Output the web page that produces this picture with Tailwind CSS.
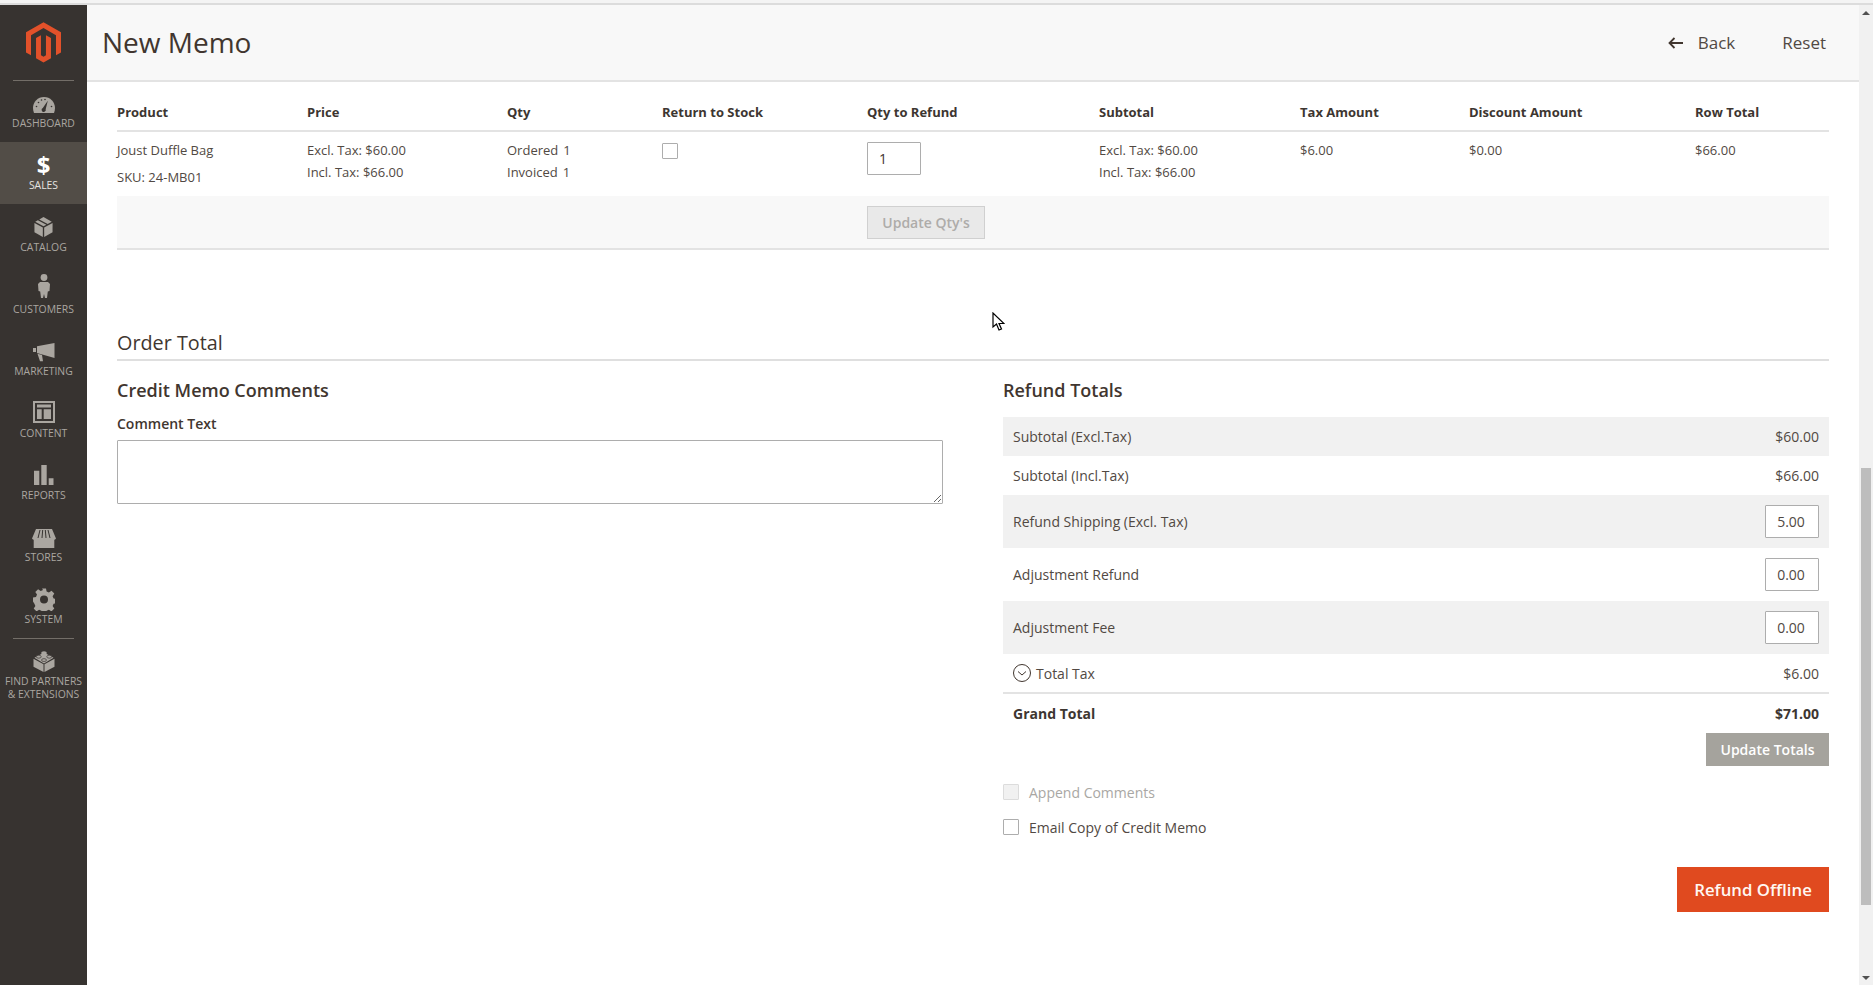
<!DOCTYPE html>
<html><head><meta charset="utf-8"><script src="https://cdn.jsdelivr.net/npm/@tailwindcss/browser@4"></script><title>New Memo</title></head>
<body class="font-['Open_Sans',sans-serif] text-[#41362f] bg-white">
<div class="relative w-[1873px] h-[985px] overflow-hidden flex flex-col">
  <div class="h-[5px] shrink-0 bg-[#f4f4f4] border-b-2 border-[#dcdcdc]"></div>
  <div class="flex-1 flex min-h-0">
    <!-- sidebar -->
    <aside class="w-[87px] shrink-0 bg-[#373330] flex flex-col text-[#aaa6a0] text-[10.4px] leading-[14px] text-center">
      <div class="h-[76px] flex items-center justify-center mx-[13px] border-b border-[#736e68]">
        <svg class="w-[35px] h-[41px]" viewBox="0 0 44 51" fill="#e2512a"><path d="M22 0 0 12.700V38l6.300 3.600V16.300L22 7.200l15.700 9.100v25.300L44 38V12.700z"/><path d="M25.100 41.600 22 43.400l-3.200-1.800V16.300l-6.200 3.600v25.300L22 50.700l9.400-5.500V19.900l-6.300-3.600z"/></svg>
      </div>
      <a class="h-[61px] flex flex-col items-center">
        <div class="h-[35px] pb-[3px] flex items-end">
          <svg class="w-[22px] h-[16px]" viewBox="0 0 22 16" fill="#aaa6a0"><path d="M11 0C4.900 0 0 4.900 0 11c0 1.700.4 3.400 1 5h20c.6-1.600 1-3.300 1-5C22 4.900 17.100 0 11 0z"/><path d="M14.800 3.800 9.800 11a2.100 2.100 0 1 0 2.900 1.200z" fill="#373330"/><circle cx="3.500" cy="9.500" r=".8" fill="#373330"/><circle cx="5.500" cy="5.500" r=".8" fill="#373330"/><circle cx="8.500" cy="3" r=".8" fill="#373330"/><circle cx="12" cy="2.500" r=".8" fill="#373330"/><circle cx="18.500" cy="9.500" r=".8" fill="#373330"/></svg>
        </div>
        <span>DASHBOARD</span>
      </a>
      <a class="h-[62px] flex flex-col items-center bg-[#524d47]">
        <div class="h-[36px] flex items-end text-white text-[24px] leading-[26px] font-bold">$</div>
        <span class="text-[#e6e4e1]">SALES</span>
      </a>
      <a class="h-[62px] flex flex-col items-center">
        <div class="h-[36px] pb-[3px] flex items-end">
          <svg class="w-[19px] h-[20px]" viewBox="0 0 19 21" fill="#aaa6a0"><path d="M0 6.200 8.800 11v10L0 16z"/><path d="M19 6.200 10.200 11v10l8.800-5z"/><path d="M9.500 0 5 2.500l8.900 4.900 4.300-2.300zM3.600 3.300.8 5l8.700 4.800 3-1.700z"/></svg>
        </div>
        <span>CATALOG</span>
      </a>
      <a class="h-[62px] flex flex-col items-center">
        <div class="h-[36px] pb-[4px] flex items-end">
          <svg class="w-[12px] h-[24px]" viewBox="0 0 12 24" fill="#aaa6a0"><circle cx="6" cy="3.500" r="3.400"/><path d="M2 8h8l2 2-.5 7-1.700.5L9 24H7l-1-4-1 4H3l-.8-6.500L.5 17 0 10z"/></svg>
        </div>
        <span>CUSTOMERS</span>
      </a>
      <a class="h-[62px] flex flex-col items-center">
        <div class="h-[36px] pb-[2px] flex items-end">
          <svg class="w-[22px] h-[19px]" viewBox="0 0 22 19" fill="#aaa6a0"><path d="M0 5h3v4H0zM4 3.300 21.500 0v15L4 10zM4.500 10.800 9 12l1 6.300H7z"/></svg>
        </div>
        <span>MARKETING</span>
      </a>
      <a class="h-[62px] flex flex-col items-center">
        <div class="h-[36px] pb-[3px] flex items-end">
          <svg class="w-[22px] h-[22px]" viewBox="0 0 22 22" fill="#aaa6a0"><path fill-rule="evenodd" d="M0 0h22v22H0zM2 2v18h18V2z"/><path d="M4 3.500h14v3H4zM4 8.300h4.700V18H4zM10.700 8.300H18V18h-7.300z"/></svg>
        </div>
        <span>CONTENT</span>
      </a>
      <a class="h-[62px] flex flex-col items-center">
        <div class="h-[36px] pb-[3px] flex items-end">
          <svg class="w-[20px] h-[20px]" viewBox="0 0 20 20" fill="#aaa6a0"><path d="M0 5.700h5.300V20H0zM7.300 0h5.400v20H7.300zM14.700 13.300h4.800V20h-4.800z"/></svg>
        </div>
        <span>REPORTS</span>
      </a>
      <a class="h-[62px] flex flex-col items-center">
        <div class="h-[36px] pb-[2px] flex items-end">
          <svg class="w-[24px] h-[19px]" viewBox="0 0 24 19" fill="#aaa6a0"><path d="M4 0h16l4 9.500c-1 1.500-2.500 1.500-3 .5H3c-.5 1-2 1-3-.5z"/><path d="M1.700 9h20.600v10H1.700z"/><path d="M8 1 6 9M10.700 1 10 9M13.300 1 14 9M16 1l2 8" stroke="#373330" stroke-width="1"/></svg>
        </div>
        <span>STORES</span>
      </a>
      <a class="h-[62px] flex flex-col items-center">
        <div class="h-[36px] pb-[1px] flex items-end">
          <svg class="w-[22px] h-[23px]" viewBox="0 0 22 22" fill="#aaa6a0"><path fill-rule="evenodd" d="M9 0h4l.6 3 2.300 1 2.600-1.700 2.800 2.800-1.700 2.600 1 2.300 3 .6v4l-3 .6-1 2.300 1.700 2.600-2.800 2.800-2.600-1.700-2.300 1-.6 3H9l-.6-3-2.300-1-2.600 1.700-2.800-2.800 1.700-2.600-1-2.300L0 13V9l3-.6 1-2.300-1.700-2.600 2.800-2.800 2.600 1.700 2.300-1zM11 7a4 4 0 1 0 0 8 4 4 0 0 0 0-8z"/></svg>
        </div>
        <span>SYSTEM</span>
      </a>
      <div class="mx-[13px] border-t border-[#736e68]"></div>
      <a class="flex flex-col items-center whitespace-nowrap">
        <div class="h-[36px] pb-[3px] flex items-end">
          <svg class="w-[22px] h-[21px]" viewBox="0 0 22 22" fill="#aaa6a0"><path d="M0 8 10.500 14v8L0 16.500zM22 8 11.500 14v8L22 16.500z"/><path d="M11 1.500 21 7l-10 6L1 7z"/><ellipse cx="11" cy="2" rx="3" ry="1.700"/><ellipse cx="5.500" cy="6" rx="2.600" ry="1.500" stroke="#373330" stroke-width=".7"/><ellipse cx="16.500" cy="6" rx="2.600" ry="1.500" stroke="#373330" stroke-width=".7"/><ellipse cx="11" cy="9.500" rx="2.600" ry="1.500" stroke="#373330" stroke-width=".7"/></svg>
        </div>
        <span class="leading-[13px]">FIND PARTNERS<br>&amp; EXTENSIONS</span>
      </a>
    </aside>
    <!-- main -->
    <main class="flex-1 min-w-0 flex flex-col text-[13px]">
      <header class="h-[77px] shrink-0 bg-[#f8f8f8] border-b-2 border-[#e3e3e3] pl-[15px] pr-[33px] flex items-center justify-between">
        <h1 class="text-[28px] leading-[36px] font-normal mt-[-1px]">New Memo</h1>
        <div class="flex items-center text-[17px] font-medium gap-[47px] text-[#514943]">
          <span class="flex items-center gap-[15px]"><svg class="w-[15px] h-[12px]" viewBox="0 0 15 12" fill="none" stroke="#41362f" stroke-width="1.800"><path d="M15 6H1.500M6.500 1 1.500 6l5 5"/></svg>Back</span>
          <span>Reset</span>
        </div>
      </header>
      <div class="px-[30px] flex-1">
        <!-- table -->
        <div class="grid grid-cols-[190px_200px_155px_205px_232px_201px_169px_226px_134px] h-[50px] items-center border-b-2 border-[#e3e3e3] font-bold text-[#3d3631] pt-[14px]">
          <span>Product</span><span>Price</span><span>Qty</span><span>Return to Stock</span><span>Qty to Refund</span><span>Subtotal</span><span>Tax Amount</span><span>Discount Amount</span><span>Row Total</span>
        </div>
        <div class="grid grid-cols-[190px_200px_155px_205px_232px_201px_169px_226px_134px] h-[64px] pt-[7px] text-[#514943]">
          <div class="leading-[22px]"><div>Joust Duffle Bag</div><div class="mt-[5px]">SKU: 24-MB01</div></div>
          <div class="leading-[22px]"><div>Excl. Tax: $60.00</div><div>Incl. Tax: $66.00</div></div>
          <div class="leading-[22px]"><div>Ordered<span class="ml-[5px]">1</span></div><div>Invoiced<span class="ml-[5px]">1</span></div></div>
          <div class="pt-[4px]"><div class="w-[16px] h-[16px] border border-[#adadad] rounded-[1px] bg-white"></div></div>
          <div class="pt-[3px]"><input value="1" class="w-[54px] h-[33px] border border-[#adadad] rounded-[1px] px-[11px] text-[14px] text-[#41362f]"></div>
          <div class="leading-[22px]"><div>Excl. Tax: $60.00</div><div>Incl. Tax: $66.00</div></div>
          <div class="leading-[22px]">$6.00</div>
          <div class="leading-[22px]">$0.00</div>
          <div class="leading-[22px]">$66.00</div>
        </div>
        <div class="h-[54px] bg-[#f8f8f8] border-b-2 border-[#e3e3e3] pl-[750px] pt-[10px]">
          <button class="w-[118px] h-[33px] bg-[#e9e9e9] border border-[#d0d0d0] text-[14px] font-semibold text-[#aeaca9]">Update Qty's</button>
        </div>
        <!-- order total -->
        <div class="mt-[79px] h-[32px] border-b-2 border-[#dfdfdf] text-[19.8px] leading-[28px] text-[#41362f]">Order Total</div>
        <div class="grid grid-cols-2 gap-[60px] mt-[15px]">
          <section>
            <h2 class="text-[18px] leading-[28px] font-semibold">Credit Memo Comments</h2>
            <label class="block mt-[10px] text-[14px] leading-[20px] font-semibold">Comment Text</label>
            <textarea class="block mt-[6px] w-full h-[64px] border border-[#adadad] rounded-[1px] bg-white"></textarea>
          </section>
          <section>
            <h2 class="text-[18px] leading-[28px] font-semibold">Refund Totals</h2>
            <div class="mt-[13px] text-[14px] text-[#514943]">
              <div class="h-[39px] px-[10px] flex items-center justify-between bg-[#f1f1f1]"><span>Subtotal (Excl.Tax)</span><span>$60.00</span></div>
              <div class="h-[39px] px-[10px] flex items-center justify-between"><span>Subtotal (Incl.Tax)</span><span>$66.00</span></div>
              <div class="h-[53px] px-[10px] flex items-center justify-between bg-[#f1f1f1]"><span>Refund Shipping (Excl. Tax)</span><input value="5.00" class="w-[54px] h-[33px] border border-[#adadad] rounded-[1px] bg-white text-center pr-[2px]"></div>
              <div class="h-[53px] px-[10px] flex items-center justify-between"><span>Adjustment Refund</span><input value="0.00" class="w-[54px] h-[33px] border border-[#adadad] rounded-[1px] bg-white text-center pr-[2px]"></div>
              <div class="h-[53px] px-[10px] flex items-center justify-between bg-[#f1f1f1]"><span>Adjustment Fee</span><input value="0.00" class="w-[54px] h-[33px] border border-[#adadad] rounded-[1px] bg-white text-center pr-[2px]"></div>
              <div class="h-[40px] px-[10px] flex items-center justify-between border-b-2 border-[#e3e3e3]"><span class="flex items-center gap-[5px]"><svg class="w-[18px] h-[18px]" viewBox="0 0 18 18" fill="none" stroke="#41362f"><circle cx="9" cy="9" r="8.500"/><path d="M5 7.500 9 11l4-3.500"/></svg>Total Tax</span><span>$6.00</span></div>
              <div class="h-[39px] px-[10px] flex items-center justify-between font-bold text-[#3d3631]"><span>Grand Total</span><span>$71.00</span></div>
            </div>
            <div class="flex justify-end">
              <button class="w-[123px] h-[33px] bg-[#a5a39d] text-white text-[14px] font-semibold">Update Totals</button>
            </div>
            <div class="mt-[16px] flex items-center gap-[10px] h-[20px] text-[14px] text-[#a9a7a4]"><div class="w-[16px] h-[16px] border border-[#dcdcdc] bg-[#f1f1f1] rounded-[1px]"></div>Append Comments</div>
            <div class="mt-[15px] flex items-center gap-[10px] h-[20px] text-[14px] text-[#514943]"><div class="w-[16px] h-[16px] border border-[#adadad] bg-white rounded-[1px]"></div>Email Copy of Credit Memo</div>
            <div class="mt-[30px] flex justify-end">
              <button class="w-[152px] h-[45px] bg-[#e04a1f] text-[#fff7f2] text-[16.8px] font-semibold">Refund Offline</button>
            </div>
          </section>
        </div>
      </div>
    </main>
    <!-- scrollbar -->
    <div class="w-[14px] shrink-0 bg-[#f1f1f1] flex flex-col items-center pt-[6px]">
      <div class="w-0 h-0 border-x-[4px] border-x-transparent border-b-[4px] border-b-[#505050]"></div>
      <div class="w-[10px] h-[437px] mt-[453px] bg-[#bdbdbd]"></div>
      <div class="mt-[71px] w-0 h-0 border-x-[4px] border-x-transparent border-t-[4px] border-t-[#505050]"></div>
    </div>
  </div>
  <svg class="absolute left-[992px] top-[312px] w-[13px] h-[19px]" viewBox="0 0 13 19"><path d="M1 1v14l3.500-3 2.500 6 2.500-1-2.500-5.500H12z" fill="#fff" stroke="#000" stroke-width="1.200"/></svg>
</div>
</body></html>
